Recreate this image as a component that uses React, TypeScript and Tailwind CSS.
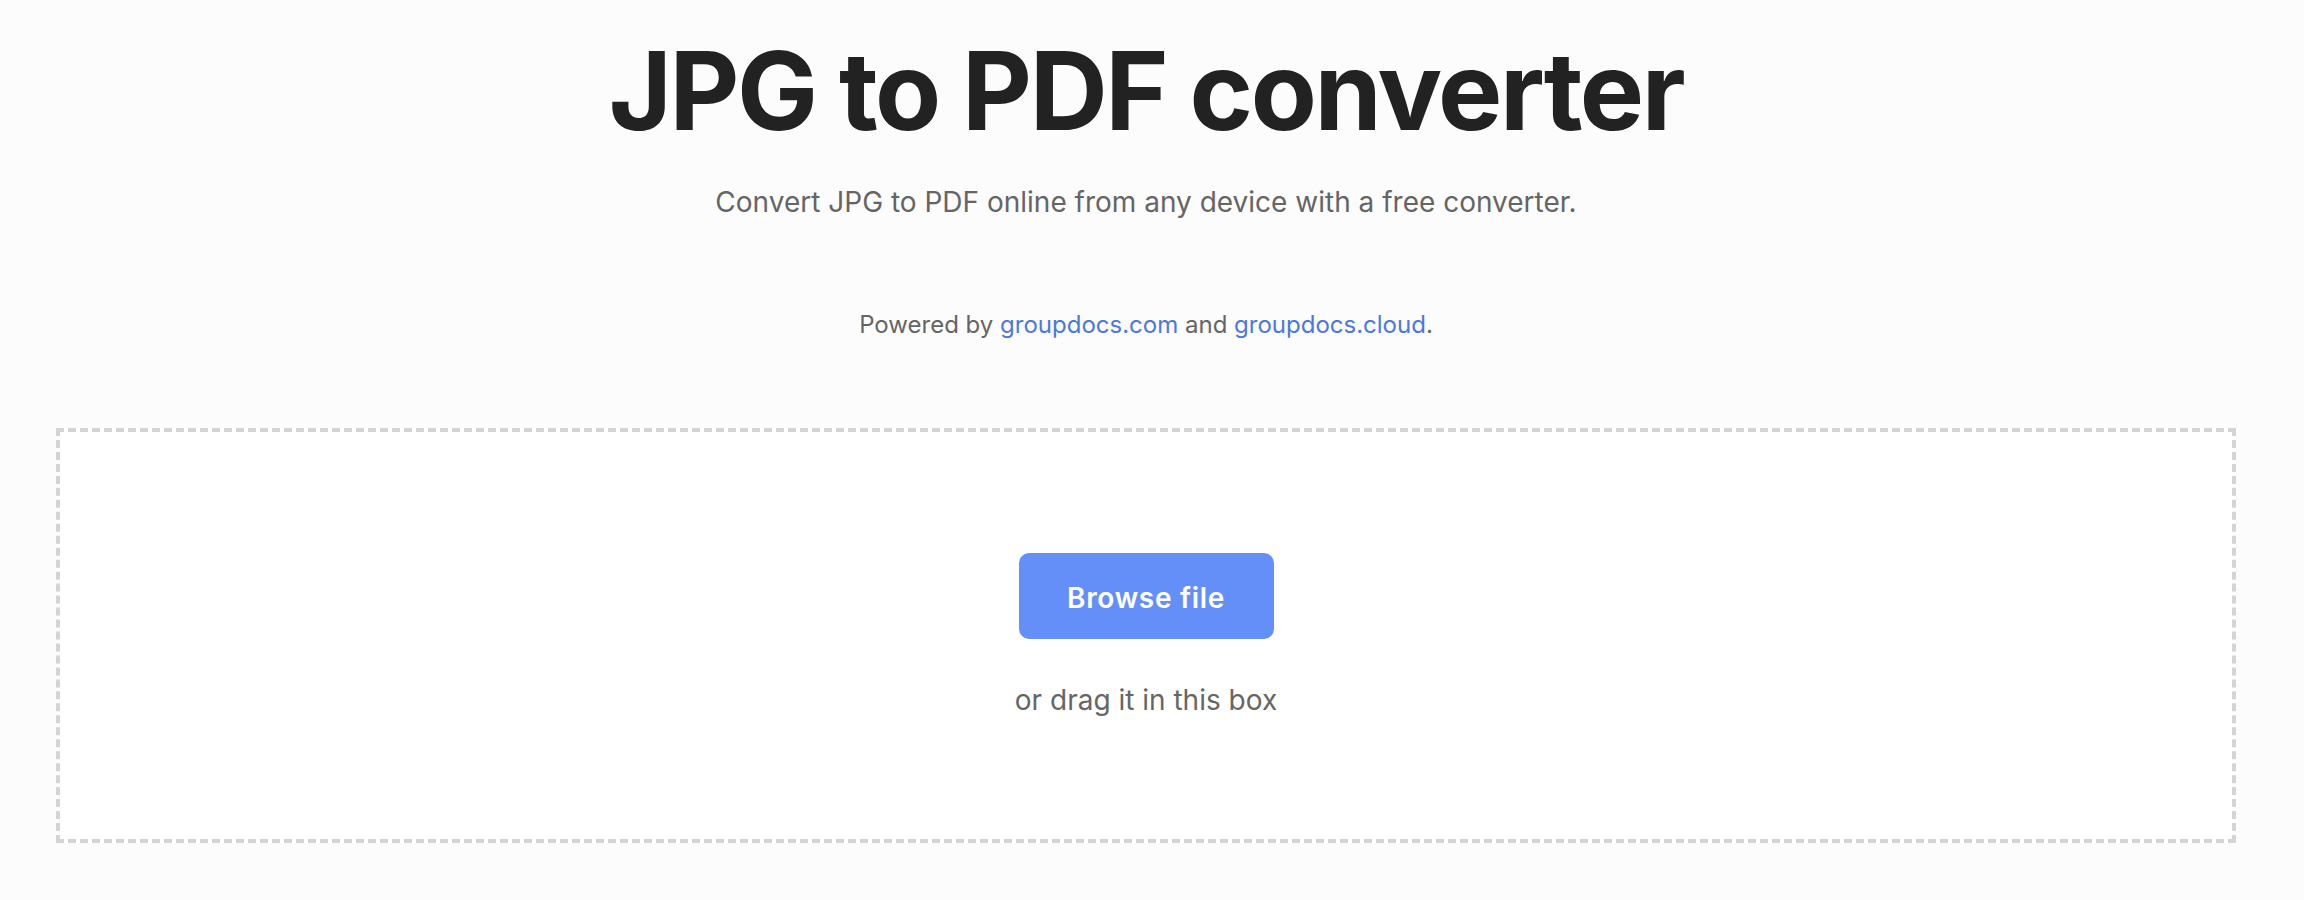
export default function App() {
  return (
    <div className="min-h-screen bg-[#fcfcfc] pr-[12px] font-['Inter',sans-serif]">
      <div className="flex flex-col items-center px-[56px] pt-[37px]">
        <h1 className="text-[108px] leading-none font-bold text-[#222222] tracking-[-0.022em]">
          JPG to PDF converter
        </h1>
        <p className="mt-[43px] text-[28px] leading-none text-[#656565]">
          Convert JPG to PDF online from any device with a free converter.
        </p>
        <p className="mt-[97px] text-[24px] leading-none text-[#656565]">
          Powered by{" "}
          <a href="#" className="text-[#4a78e0]">
            groupdocs.com
          </a>{" "}
          and{" "}
          <a href="#" className="text-[#4a78e0]">
            groupdocs.cloud
          </a>
          .
        </p>
        <div className="mt-[91px] w-full h-[415px] bg-white border-4 border-dashed border-[#d4d4d4] flex flex-col items-center pt-[121px]">
          <button className="w-[255px] h-[86px] pt-[3px] rounded-[10px] bg-[#648ff8] text-white text-[28px] font-semibold tracking-[0.025em]">
            Browse file
          </button>
          <p className="mt-[47px] text-[28px] leading-none text-[#666666]">or drag it in this box</p>
        </div>
      </div>
    </div>
  );
}
